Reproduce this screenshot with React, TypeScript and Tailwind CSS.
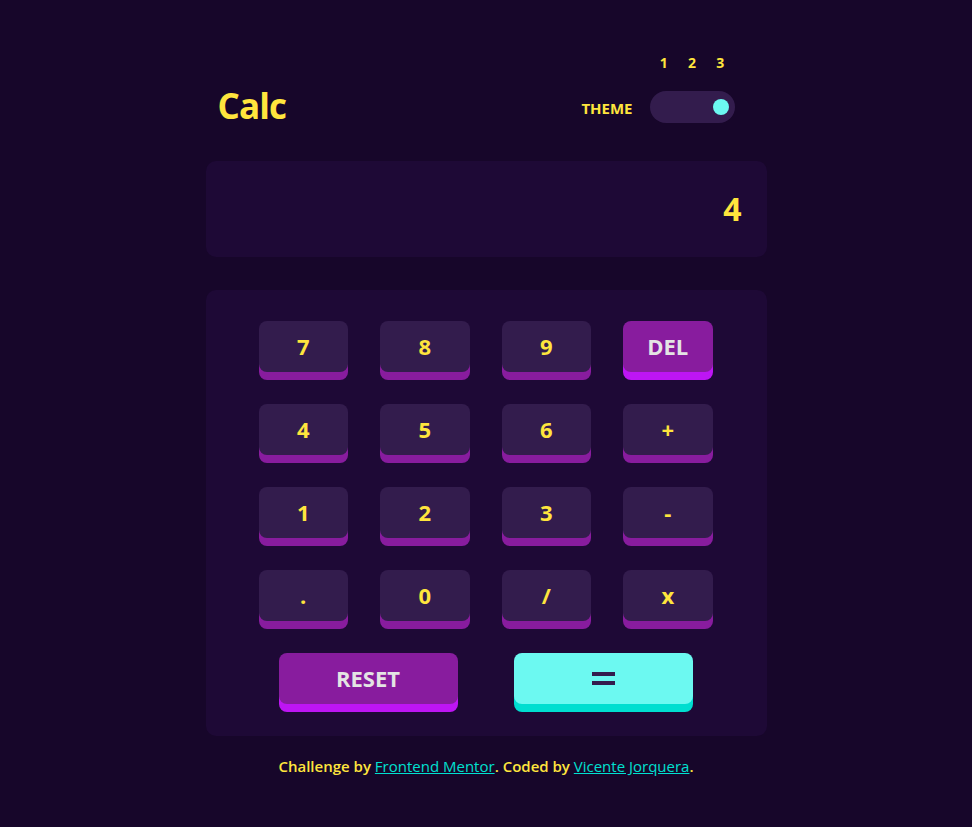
import React from "react";

const keys = ["7", "8", "9", "DEL", "4", "5", "6", "+", "1", "2", "3", "-", ".", "0", "/", "x"];

export default function App() {
  return (
    <div className="min-h-screen bg-[#17062a] flex justify-center font-['Open_Sans',sans-serif]">
      <div className="w-[561px] pt-[54px]">
        {/* Header */}
        <header className="flex items-end justify-between pl-[12px] pr-[32px]">
          <h1 className="text-[35px] leading-[34px] font-bold text-[#ffe53d] tracking-tight">Calc</h1>
          <div className="flex items-end gap-[17px]">
            <span className="text-[15px] leading-[30px] font-bold text-[#ffe53d]">THEME</span>
            <div className="flex flex-col w-[85px]">
              <div className="grid grid-cols-3 text-center text-[14px] leading-[18px] font-bold text-[#ffe53d] mb-[19px]">
                <span>1</span>
                <span>2</span>
                <span>3</span>
              </div>
              <div className="h-[32px] rounded-full bg-[#331c4d] flex items-center justify-end pr-[6px]">
                <div className="w-[16px] h-[16px] rounded-full bg-[#6cf9f1]" />
              </div>
            </div>
          </div>
        </header>

        {/* Screen */}
        <div className="mt-[38px] h-[96px] rounded-[10px] bg-[#1e0936] flex items-center justify-end pr-[25px]">
          <span className="text-[32px] font-bold text-[#ffe53d] leading-none">4</span>
        </div>

        {/* Keypad */}
        <div className="mt-[33px] rounded-[10px] bg-[#1e0936] pt-[31px] pb-[32px] pl-[53px] pr-[54px]">
          <div className="grid grid-cols-4 gap-x-[32px] gap-y-[32px]">
            {keys.map((k) =>
              k === "DEL" ? (
                <button
                  key={k}
                  className="h-[51px] rounded-[8px] bg-[#881c9e] shadow-[0_8px_0_#be15f4] text-[22px] font-bold text-[#e4e4e4]"
                >
                  {k}
                </button>
              ) : (
                <button
                  key={k}
                  className="h-[51px] rounded-[8px] bg-[#331c4d] shadow-[0_8px_0_#881c9e] text-[22px] font-bold text-[#ffe53d]"
                >
                  {k}
                </button>
              )
            )}
          </div>
          <div className="mt-[32px] flex justify-center gap-[56px]">
            <button className="w-[179px] h-[51px] rounded-[8px] bg-[#881c9e] shadow-[0_8px_0_#be15f4] text-[22px] font-bold text-[#e4e4e4]">
              RESET
            </button>
            <button className="w-[179px] h-[51px] rounded-[8px] bg-[#6cf9f1] shadow-[0_8px_0_#00ded0] flex items-center justify-center">
              <span className="flex flex-col gap-[5px]">
                <span className="block w-[23px] h-[4px] bg-[#331c4d]" />
                <span className="block w-[23px] h-[4px] bg-[#331c4d]" />
              </span>
            </button>
          </div>
        </div>

        {/* Footer */}
        <p className="mt-[19px] text-center text-[15px] font-semibold text-[#ffe53d]">
          Challenge by{" "}
          <a href="#" className="text-[#00e0d1] underline font-normal">
            Frontend Mentor
          </a>
          . Coded by{" "}
          <a href="#" className="text-[#00e0d1] underline font-normal">
            Vicente Jorquera
          </a>
          .
        </p>
      </div>
    </div>
  );
}
